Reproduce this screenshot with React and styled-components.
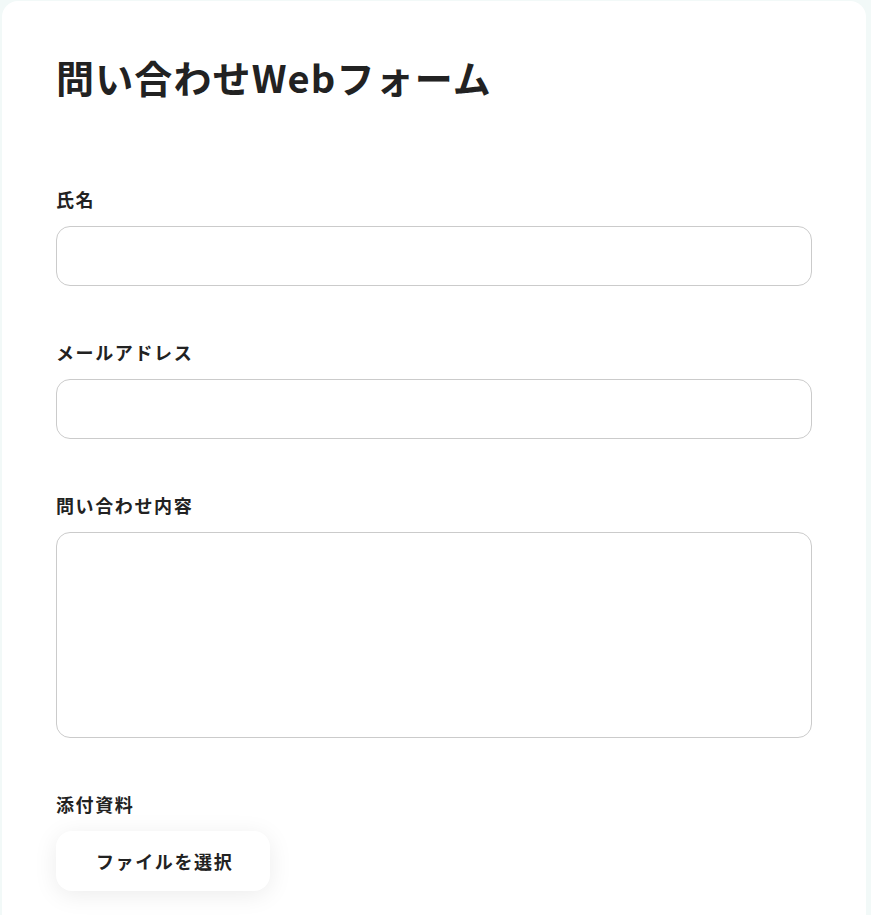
import React from "react";
import styled, { createGlobalStyle } from "styled-components";

const Global = createGlobalStyle`
  html, body { margin: 0; padding: 0; background: #f2f9f8; }
  body { font-family: "Noto Sans CJK JP", "Noto Sans", sans-serif; color: #222; }
  * { box-sizing: border-box; }
`;

const Page = styled.div`
  padding: 1px 5px 0 2px;
  min-height: 915px;
`;

const Card = styled.form`
  background: #fff;
  border-radius: 16px;
  padding: 48px 54px 40px 54px;
  display: flex;
  flex-direction: column;
`;

const Title = styled.h1`
  margin: 0 0 81px;
  font-size: 38px;
  line-height: 56px;
  font-weight: 700;
  letter-spacing: 0.03em;
  color: #222;
`;

const Fields = styled.div`
  display: flex;
  flex-direction: column;
  gap: 53px;
`;

const Field = styled.div`
  display: flex;
  flex-direction: column;
  gap: 13px;
  align-items: flex-start;
`;

const Label = styled.label`
  font-size: 18px;
  line-height: 27px;
  font-weight: 700;
  letter-spacing: 0.09em;
  color: #222;
`;

const Input = styled.input`
  width: 100%;
  height: 60px;
  border: 1px solid #cbcbcb;
  border-radius: 14px;
  background: #fff;
  padding: 0 16px;
  font: inherit;
  font-size: 16px;
  outline: none;
`;

const TextArea = styled.textarea`
  width: 100%;
  height: 206px;
  border: 1px solid #cbcbcb;
  border-radius: 14px;
  background: #fff;
  padding: 14px 16px;
  font: inherit;
  font-size: 16px;
  resize: none;
  outline: none;
  display: block;
`;

const FileButton = styled.button`
  height: 60px;
  padding: 0 37px 0 40px;
  border: none;
  border-radius: 16px;
  background: #fff;
  box-shadow: 0 4px 24px rgba(0, 0, 0, 0.08);
  font-family: inherit;
  font-size: 18px;
  font-weight: 700;
  letter-spacing: 0.09em;
  color: #222;
  cursor: pointer;
`;

export default function App() {
  return (
    <>
      <Global />
      <Page>
        <Card onSubmit={(e) => e.preventDefault()}>
          <Title>問い合わせWebフォーム</Title>
          <Fields>
            <Field>
              <Label htmlFor="name">氏名</Label>
              <Input id="name" type="text" />
            </Field>
            <Field>
              <Label htmlFor="email">メールアドレス</Label>
              <Input id="email" type="email" />
            </Field>
            <Field>
              <Label htmlFor="msg">問い合わせ内容</Label>
              <TextArea id="msg" />
            </Field>
            <Field>
              <Label>添付資料</Label>
              <FileButton type="button">ファイルを選択</FileButton>
            </Field>
          </Fields>
        </Card>
      </Page>
    </>
  );
}
